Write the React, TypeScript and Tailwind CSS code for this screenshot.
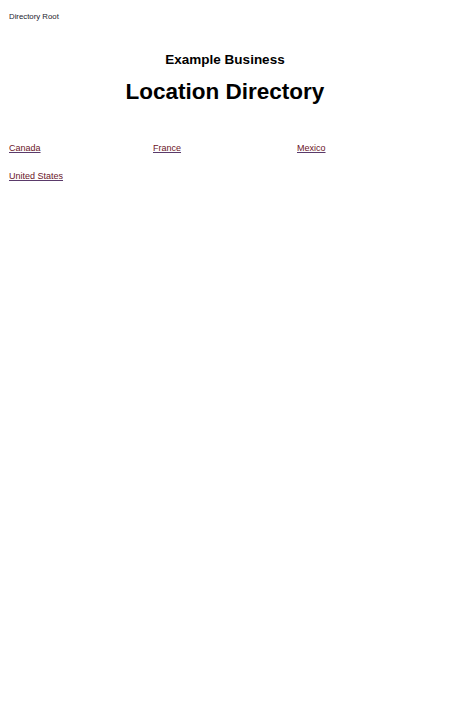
export default function App() {
  const countries = ["Canada", "France", "Mexico", "United States"];
  return (
    <div className="px-[9px] pt-[12px] font-['Liberation_Sans',Arial,sans-serif] text-black bg-white min-h-screen">
      <nav className="text-[7.8px] leading-[10px] text-[#1c1c2e]">Directory Root</nav>
      <div className="mt-[30px] flex flex-col items-center">
        <h2 className="text-[13.5px] leading-[16px] font-bold">Example Business</h2>
        <h1 className="mt-[11px] text-[22.5px] leading-[26px] font-bold">Location Directory</h1>
      </div>
      <ul className="mt-[37px] grid grid-cols-3 gap-y-[16px]">
        {countries.map((c) => (
          <li key={c} className="text-[9px] leading-[12px]">
            <a href="#" className="text-[#6b1428] underline decoration-[#5a3a6a]">
              {c}
            </a>
          </li>
        ))}
      </ul>
    </div>
  );
}
